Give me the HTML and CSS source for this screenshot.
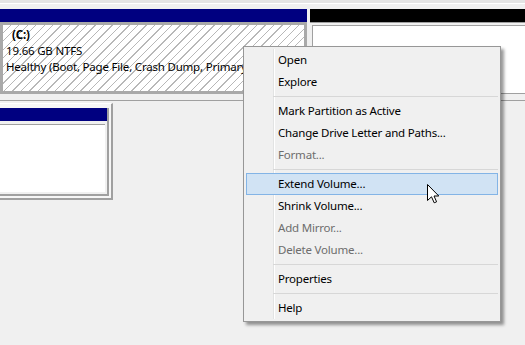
FILE: index.html
```html
<!DOCTYPE html>
<html lang="en">
<head>
    <meta charset="UTF-8">
    <title>Disk Management</title>
    <link rel="stylesheet" href="styles.css">
</head>
<body>
    <div class="screen">
        <div class="topedge"></div>

        <div class="disk">
            <div class="part selected">
                <div class="bar navy"></div>
                <div class="body hatch">
                    <div class="vname">(C:)</div>
                    <div>19.66 GB NTFS</div>
                    <div class="status">Healthy (Boot, Page File, Crash Dump, Primary Partition)</div>
                </div>
            </div>
            <div class="part grow">
                <div class="bar black"></div>
                <div class="body plain">
                    <div class="inner"></div>
                </div>
            </div>
        </div>

        <div class="disk2">
            <div class="part2">
                <div class="part2in">
                    <div class="bar navy"></div>
                    <div class="body2">
                        <div class="white"></div>
                    </div>
                </div>
            </div>
        </div>

        <div class="menu">
            <div class="item">Open</div>
            <div class="item">Explore</div>
            <div class="sep"></div>
            <div class="item">Mark Partition as Active</div>
            <div class="item">Change Drive Letter and Paths...</div>
            <div class="item disabled">Format...</div>
            <div class="sep"></div>
            <div class="item hover">Extend Volume...</div>
            <div class="item">Shrink Volume...</div>
            <div class="item disabled">Add Mirror...</div>
            <div class="item disabled">Delete Volume...</div>
            <div class="sep"></div>
            <div class="item">Properties</div>
            <div class="sep"></div>
            <div class="item">Help</div>
        </div>

        <svg class="cursor" width="13" height="20" viewBox="0 0 13 20">
            <path d="M0.5 0.5 V16.5 L4.5 12.8 L7.2 18.8 L9.6 17.8 L7 12 L11.8 12 Z" fill="#fff" stroke="#000" stroke-width="1" stroke-linejoin="miter"/>
        </svg>
    </div>
</body>
</html>
```

FILE: styles.css
```css
body {
    margin: 0;
    background-color: #f0f0f0;
    font-family: "Noto Sans", "Open Sans", sans-serif;
    font-size: 11.5px;
    letter-spacing: -0.2px;
    color: #000;
}

.screen {
    position: relative;
    width: 525px;
    height: 345px;
    overflow: hidden;
}

.topedge {
    height: 3px;
    background-color: #e4e4e4;
    border-bottom: 1px solid #fff;
    margin-bottom: 5px;
}

/* first disk row */
.disk {
    display: flex;
    gap: 3px;
    padding-bottom: 6px;
    border-bottom: 1px solid #a0a0a0;
}
.part {
    display: flex;
    flex-direction: column;
    width: 307px;
}
.part.grow {
    flex: 1;
    width: auto;
}
.bar {
    height: 13px;
}
.navy {
    background-color: #000080;
}
.black {
    background-color: #000;
}
.body {
    height: 72px;
    box-sizing: border-box;
}
.hatch {
    border: 3px solid #a9a9a9;
    padding: 2px 0 0 3px;
    line-height: 16px;
    white-space: nowrap;
    overflow: hidden;
    background: repeating-linear-gradient(135deg, #fff 0 5px, #b8b8b8 5px 6px);
}
.vname {
    font-weight: bold;
    padding-left: 6px;
}
/* the context menu covers the rest of this line */
.status {
    width: 237px;
    overflow: hidden;
}
.plain {
    display: flex;
    border-top: 1px solid #a0a0a0;
    padding: 2px 0 0 2px;
}
.inner {
    flex: 1;
    background-color: #fff;
    border-top: 1px solid #a0a0a0;
    border-left: 1px solid #a0a0a0;
    border-bottom: 1px solid #a0a0a0;
}

/* second disk row */
.disk2 {
    padding-top: 2px;
}
.part2 {
    width: 113px;
    height: 97px;
    box-sizing: border-box;
    border-top: 1px solid #fff;
    border-right: 2px solid #a0a0a0;
    border-bottom: 2px solid #a0a0a0;
    padding: 4px 2px 2px 0;
    background-color: #f6f6f6;
}
.part2in {
    height: 100%;
    box-sizing: border-box;
    border-right: 2px solid #a0a0a0;
    border-bottom: 2px solid #a0a0a0;
    display: flex;
    flex-direction: column;
}
.body2 {
    flex: 1;
    display: flex;
    padding: 3px 2px 2px 0;
    background-color: #f0f0f0;
}
.white {
    flex: 1;
    background-color: #fff;
    border-top: 1px solid #a0a0a0;
}

/* context menu */
.menu {
    position: absolute;
    left: 243px;
    top: 46px;
    width: 258px;
    box-sizing: border-box;
    border: 1px solid #979797;
    background-color: #f0f0f0;
    padding: 2px;
    box-shadow: 3px 3px 3px rgba(0, 0, 0, 0.4);
}
.menu::before {
    content: "";
    position: absolute;
    left: 29px;
    top: 2px;
    bottom: 2px;
    width: 1px;
    background-color: #e2e3e3;
    border-right: 1px solid #fff;
}
.item {
    position: relative;
    height: 22px;
    line-height: 22px;
    padding-left: 32px;
    box-sizing: border-box;
}
.item.disabled {
    color: #6d6d6d;
}
.item.hover {
    background-color: #d1e3f4;
    border: 1px solid #83b4e6;
    line-height: 20px;
    padding-left: 31px;
}
.sep {
    position: relative;
    height: 7px;
    margin-left: 27px;
}
.sep::after {
    content: "";
    position: absolute;
    left: 0;
    right: 0;
    top: 3px;
    height: 1px;
    background-color: #d7d7d7;
}

.cursor {
    position: absolute;
    left: 427px;
    top: 184px;
}
```
